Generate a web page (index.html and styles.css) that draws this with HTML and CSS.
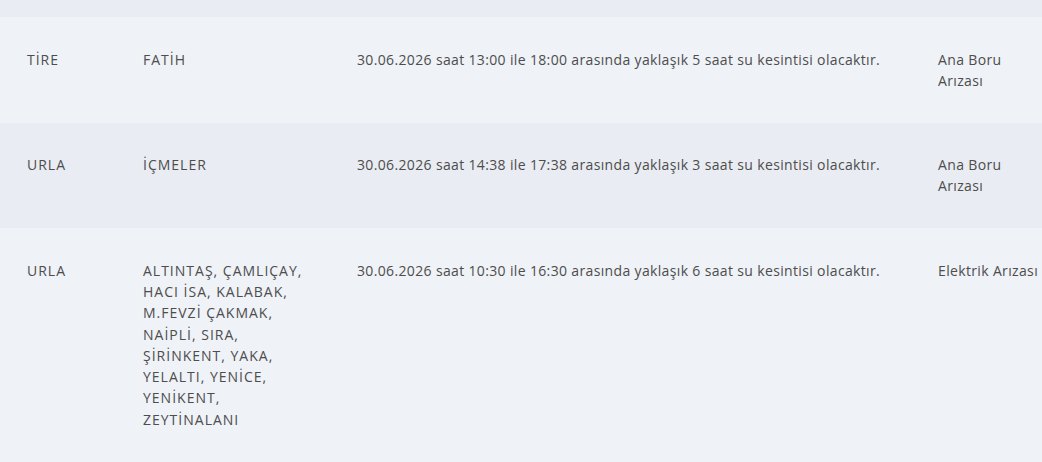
FILE: index.html
```html
<!DOCTYPE html>
<html lang="tr">
<head>
<meta charset="utf-8">
<title>Su Kesintileri</title>
<link rel="stylesheet" href="styles.css">
</head>
<body>
<div class="prev-row"></div>
<table class="outages">
  <colgroup>
    <col class="c-ilce">
    <col class="c-mahalle">
    <col class="c-aciklama">
    <col class="c-neden">
  </colgroup>
  <tbody>
    <tr class="row light">
      <td class="cell first caps">TİRE</td>
      <td class="cell caps">FATİH</td>
      <td class="cell">30.06.2026 saat 13:00 ile 18:00 arasında yaklaşık 5 saat su kesintisi olacaktır.</td>
      <td class="cell last">Ana Boru Arızası</td>
    </tr>
    <tr class="row dark">
      <td class="cell first caps">URLA</td>
      <td class="cell caps">İÇMELER</td>
      <td class="cell">30.06.2026 saat 14:38 ile 17:38 arasında yaklaşık 3 saat su kesintisi olacaktır.</td>
      <td class="cell last">Ana Boru Arızası</td>
    </tr>
    <tr class="row light">
      <td class="cell first caps">URLA</td>
      <td class="cell caps">ALTINTAŞ, ÇAMLIÇAY, HACI İSA, KALABAK, M.FEVZİ ÇAKMAK, NAİPLİ, SIRA, ŞİRİNKENT, YAKA, YELALTI, YENİCE, YENİKENT, ZEYTİNALANI</td>
      <td class="cell">30.06.2026 saat 10:30 ile 16:30 arasında yaklaşık 6 saat su kesintisi olacaktır.</td>
      <td class="cell last">Elektrik Arızası</td>
    </tr>
  </tbody>
</table>
</body>
</html>
```

FILE: styles.css
```css
html, body {
  margin: 0;
  padding: 0;
  background: #eff2f7;
  overflow: hidden;
}
body {
  width: 1042px;
  font-family: "Open Sans", "Noto Sans", sans-serif;
  font-size: 14px;
  color: #4d4d4d;
}
.prev-row {
  height: 17px;
  background: #e9ecf2;
}
.outages {
  border-collapse: collapse;
  table-layout: fixed;
  width: 1042px;
}
.c-ilce { width: 143px; }
.c-mahalle { width: 214px; }
.c-aciklama { width: 581px; }
.c-neden { width: 104px; }
.row.light { background: #eff2f7; }
.row.dark { background: #e9ecf2; }
.cell {
  vertical-align: top;
  padding: 31.5px 44px 31.5px 0;
  line-height: 21.3px;
  text-align: left;
  letter-spacing: 0.35px;
}
.cell.caps { letter-spacing: 1px; }
.cell.first { padding-left: 27px; padding-right: 0; }
.cell.last { padding-right: 0; }
```
